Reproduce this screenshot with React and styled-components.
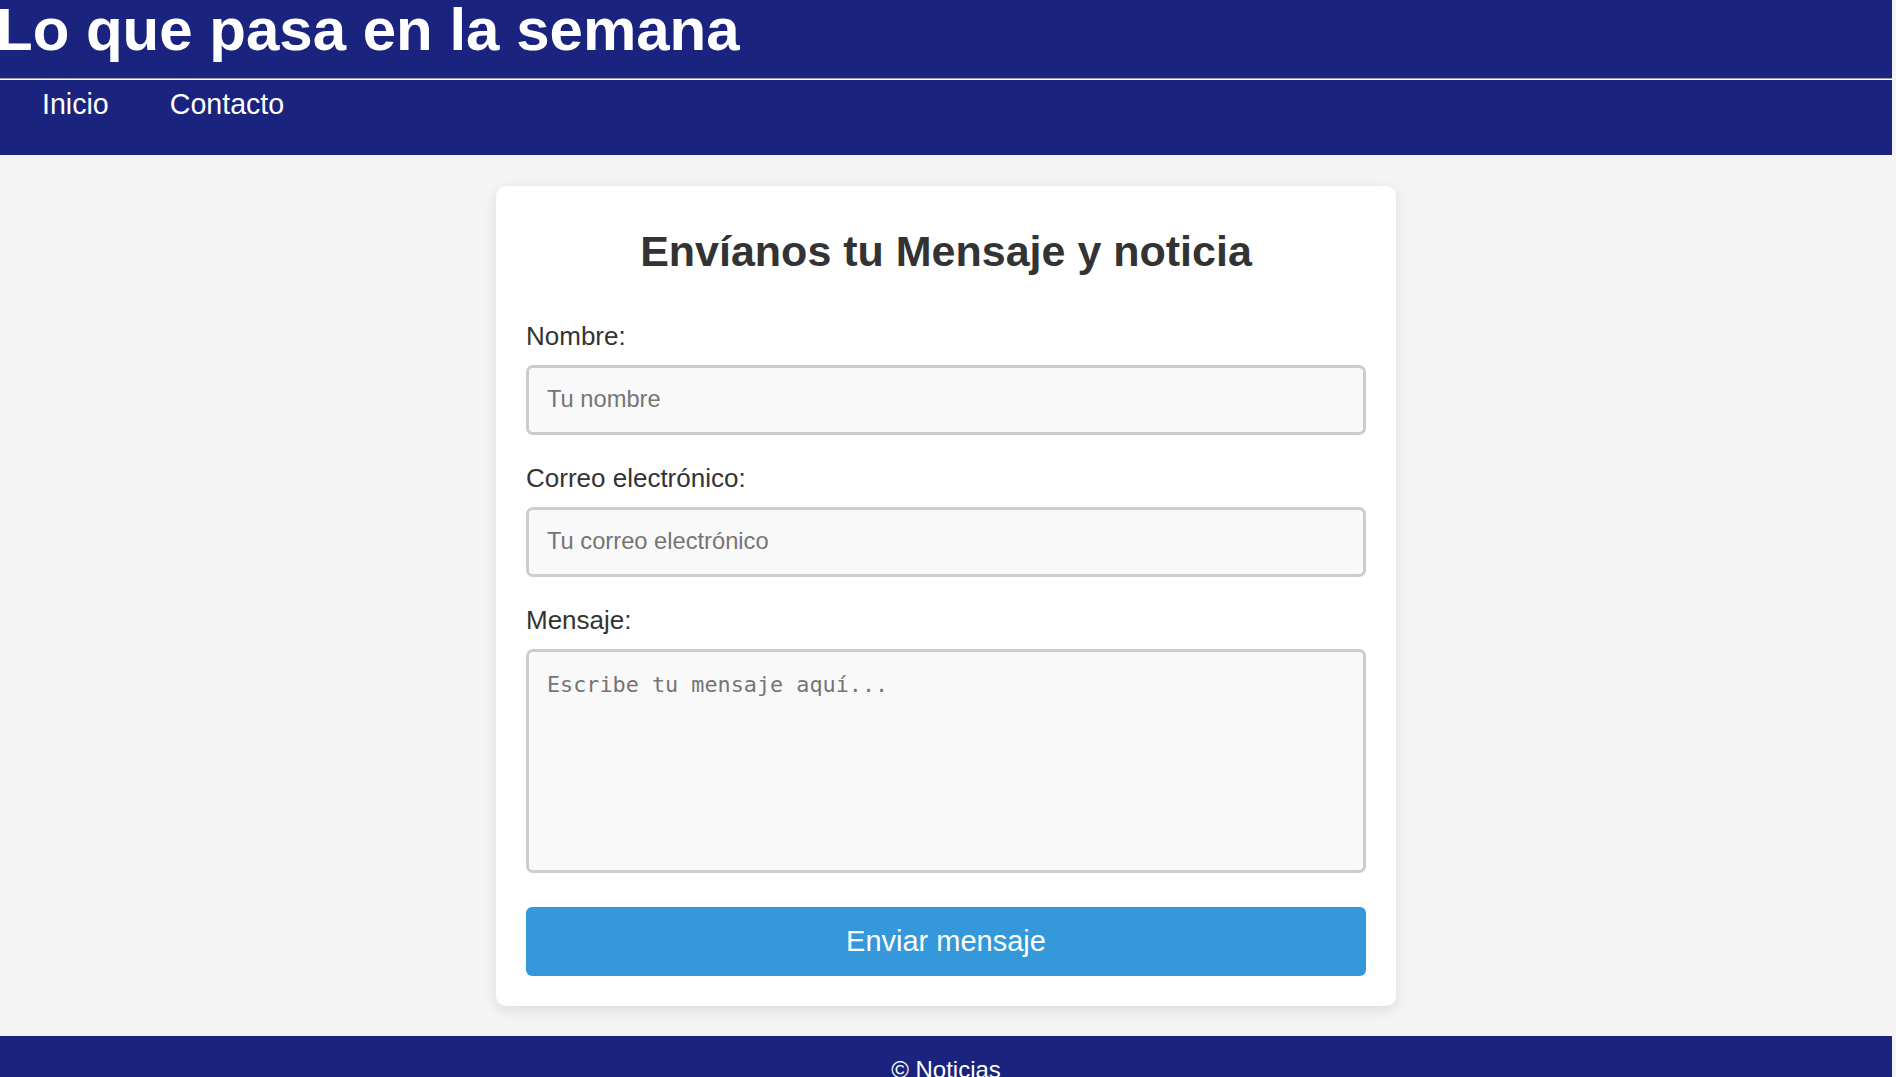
import React from "react";
import styled, { createGlobalStyle } from "styled-components";

const GlobalStyle = createGlobalStyle`
  html, body {
    margin: 0;
    padding: 0;
    background: #f4f4f4;
    font-family: "Liberation Sans", Arial, sans-serif;
  }
  * { box-sizing: border-box; }
`;

const Page = styled.div`
  margin-right: 4px;
  overflow: hidden;
`;

const Header = styled.header`
  background: #1a237e;
  color: #fff;
  height: 155px;
  overflow: hidden;
`;

const Title = styled.h1`
  margin: -4px 0 0 -4px;
  font-size: 60px;
  font-weight: bold;
  line-height: 67px;
  white-space: nowrap;
`;

const Divider = styled.hr`
  margin: 15px 0 0;
  border: 0;
  border-top: 1px solid #9a9ab0;
  border-bottom: 1px solid #ffffff;
  height: 0;
`;

const NavList = styled.ul`
  list-style: none;
  display: flex;
  gap: 61px;
  margin: 8px 0 0;
  padding: 0 0 0 42px;
`;

const NavLink = styled.a`
  color: #fff;
  text-decoration: none;
  font-size: 28.6px;
  line-height: 32px;
`;

const Main = styled.main`
  padding: 31px 0 30px;
`;

const Card = styled.section`
  width: 900px;
  margin: 0 auto;
  background: #fff;
  border-radius: 10px;
  padding: 30px;
  box-shadow: 0 4px 14px rgba(0, 0, 0, 0.1);
`;

const Heading = styled.h2`
  margin: 11px 0 45px;
  text-align: center;
  color: #333;
  font-size: 43px;
  line-height: 49px;
  font-weight: bold;
`;

const Form = styled.form`
  display: flex;
  flex-direction: column;
`;

const Field = styled.div`
  display: flex;
  flex-direction: column;
  margin-bottom: ${(p) => (p.$last ? "34px" : "28.5px")};
`;

const Label = styled.label`
  color: #333;
  font-size: 26px;
  line-height: 30px;
  margin-bottom: 13.5px;
`;

const fieldBase = `
  width: 100%;
  display: block;
  background: #f9f9f9;
  border: 3px solid #cccccc;
  border-radius: 7px;
  color: #333;
  outline: none;
  &::placeholder { color: #757575; opacity: 1; }
`;

const Input = styled.input`
  ${fieldBase}
  height: 70px;
  padding: 0 18px;
  font-family: "Liberation Sans", Arial, sans-serif;
  font-size: 23.7px;
`;

const TextArea = styled.textarea`
  ${fieldBase}
  height: 224px;
  padding: 20px 18px;
  resize: none;
  font-family: "DejaVu Sans Mono", monospace;
  font-size: 21.8px;
`;

const Button = styled.button`
  height: 69px;
  border: 0;
  border-radius: 6px;
  background: #3498db;
  color: #fff;
  font-family: "Liberation Sans", Arial, sans-serif;
  font-size: 29px;
  cursor: pointer;
`;

const Footer = styled.footer`
  background: #1a237e;
  color: #fff;
  text-align: center;
  padding: 20px 0;
  font-size: 24px;
  line-height: 28px;
`;

export default function App() {
  return (
    <Page>
      <GlobalStyle />
      <Header>
        <Title>Lo que pasa en la semana</Title>
        <Divider />
        <nav>
          <NavList>
            <li><NavLink href="#">Inicio</NavLink></li>
            <li><NavLink href="#">Contacto</NavLink></li>
          </NavList>
        </nav>
      </Header>
      <Main>
        <Card>
          <Heading>Envíanos tu Mensaje y noticia</Heading>
          <Form onSubmit={(e) => e.preventDefault()}>
            <Field>
              <Label htmlFor="nombre">Nombre:</Label>
              <Input id="nombre" type="text" placeholder="Tu nombre" />
            </Field>
            <Field>
              <Label htmlFor="correo">Correo electrónico:</Label>
              <Input id="correo" type="email" placeholder="Tu correo electrónico" />
            </Field>
            <Field $last>
              <Label htmlFor="mensaje">Mensaje:</Label>
              <TextArea id="mensaje" placeholder="Escribe tu mensaje aquí..." />
            </Field>
            <Button type="submit">Enviar mensaje</Button>
          </Form>
        </Card>
      </Main>
      <Footer>© Noticias</Footer>
    </Page>
  );
}
